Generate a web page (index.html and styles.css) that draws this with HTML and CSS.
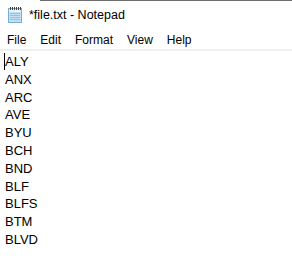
FILE: index.html
```html
<!DOCTYPE html>
<html lang="en">
<head>
  <meta charset="UTF-8" />
  <title>*file.txt - Notepad</title>
  <link rel="stylesheet" href="styles.css">
</head>
<body>

<div class="window">
  <div class="edge"></div>

  <div class="title-bar">
    <svg class="app-icon" width="17" height="18" viewBox="0 0 17 18">
      <rect x="1.5" y="2.5" width="13" height="14" fill="#c4e1f3" stroke="#78aed3" />
      <rect x="2" y="3" width="12" height="3" fill="#e6f3fa" />
      <line x1="3" y1="7.5" x2="13" y2="7.5" stroke="#93c2df" />
      <line x1="3" y1="9.5" x2="13" y2="9.5" stroke="#93c2df" />
      <line x1="3" y1="11.5" x2="13" y2="11.5" stroke="#93c2df" />
      <line x1="3" y1="13.5" x2="13" y2="13.5" stroke="#93c2df" />
      <g fill="#3b4650">
        <rect x="3" y="1" width="1" height="3" />
        <rect x="5" y="1" width="1" height="3" />
        <rect x="7" y="1" width="1" height="3" />
        <rect x="9" y="1" width="1" height="3" />
        <rect x="11" y="1" width="1" height="3" />
        <rect x="13" y="1" width="1" height="3" />
      </g>
    </svg>
    <span class="title">*file.txt - Notepad</span>
  </div>

  <div class="menu-bar">
    <span class="menu-item">File</span>
    <span class="menu-item">Edit</span>
    <span class="menu-item">Format</span>
    <span class="menu-item">View</span>
    <span class="menu-item">Help</span>
  </div>

  <div class="editor">
    <div class="line"><span class="caret"></span>ALY</div>
    <div class="line">ANX</div>
    <div class="line">ARC</div>
    <div class="line">AVE</div>
    <div class="line">BYU</div>
    <div class="line">BCH</div>
    <div class="line">BND</div>
    <div class="line">BLF</div>
    <div class="line">BLFS</div>
    <div class="line">BTM</div>
    <div class="line">BLVD</div>
  </div>
</div>

</body>
</html>
```

FILE: styles.css
```css
* {
  box-sizing: border-box;
  margin: 0;
  padding: 0;
}

body {
  background: #ffffff;
  font-family: 'Segoe UI', 'Liberation Sans', Arial, sans-serif;
  color: #000000;
}

.window {
  width: 292px;
  height: 275px;
  background: #ffffff;
  overflow: hidden;
}

.edge {
  height: 1px;
  margin-left: 40px;
  background: #6e6e6e;
}

.title-bar {
  height: 29px;
  display: flex;
  align-items: center;
  padding-left: 7px;
  padding-bottom: 1px;
}

.app-icon {
  display: block;
  margin-right: 5px;
}

.title {
  font-size: 12.5px;
  color: #000000;
}

.menu-bar {
  height: 19px;
  display: flex;
  align-items: center;
  font-size: 12px;
}

.menu-item {
  padding: 0 7px;
}

.editor {
  border-top: 2px solid #f0f0f0;
  padding: 2px 0 0 5px;
  font-size: 13px;
  line-height: 17.8px;
}

.line {
  position: relative;
  height: 17.8px;
}

.caret {
  position: absolute;
  left: -1px;
  top: 0;
  width: 1px;
  height: 17px;
  background: #000000;
}
```
